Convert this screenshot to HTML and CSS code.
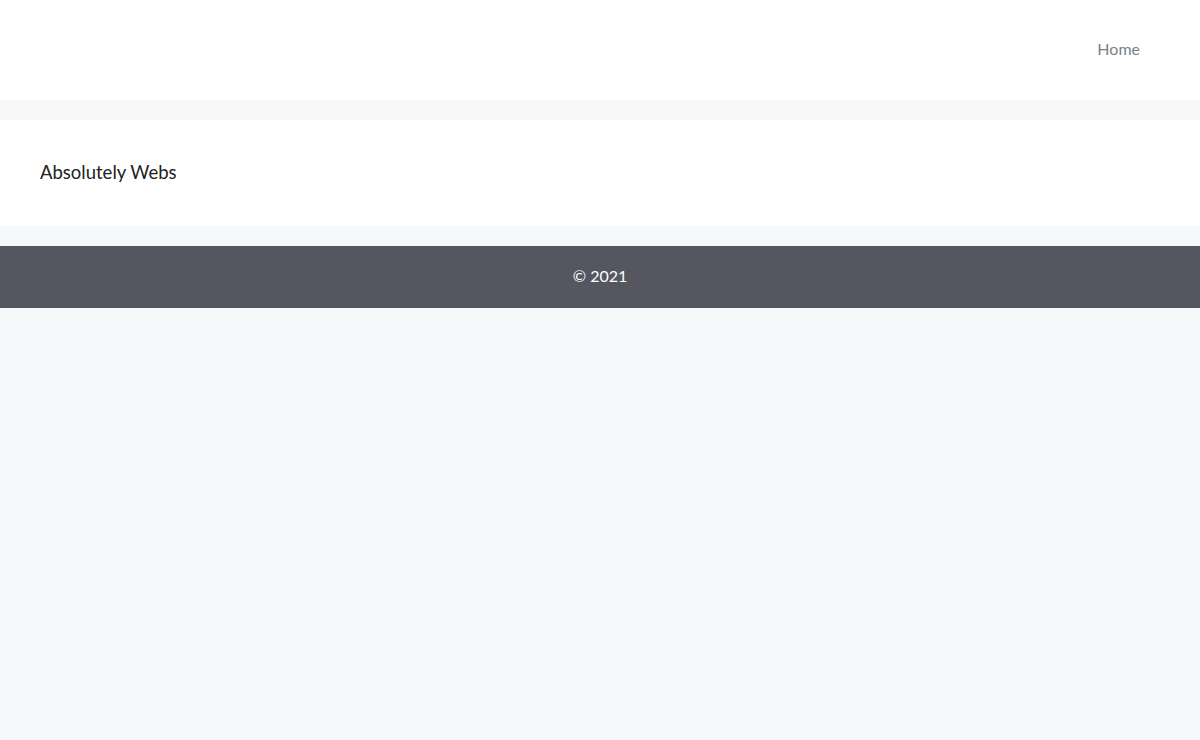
FILE: index.html
```html
<!DOCTYPE html>
<html>
<head>
<meta charset="utf-8">
<link rel="stylesheet" href="styles.css">
</head>
<body>
<header class="site-header">
  <nav class="nav"><a class="nav-link" href="#">Home</a></nav>
</header>
<main class="content">
  <p class="title">Absolutely Webs</p>
</main>
<footer class="site-footer">© 2021</footer>
</body>
</html>
```
FILE: styles.css
```css
html, body {
  margin: 0;
  padding: 0;
  background: #f7f8fa;
  font-family: Lato, "Open Sans", sans-serif;
}
.site-header {
  height: 100px;
  background: #ffffff;
  display: flex;
  align-items: center;
  justify-content: flex-end;
  padding: 0 60px 4px;
  box-sizing: border-box;
}
.nav-link {
  color: #7b818c;
  font-size: 16px;
  text-decoration: none;
}
.content {
  margin-top: 20px;
  height: 106px;
  background: #ffffff;
  display: flex;
  align-items: center;
  padding: 0 40px 2px;
  box-sizing: border-box;
}
.title {
  margin: 0;
  font-size: 18.5px;
  color: #222222;
}
.site-footer {
  margin-top: 20px;
  height: 62px;
  background: #55565f;
  color: #ffffff;
  font-size: 16px;
  display: flex;
  align-items: center;
  justify-content: center;
  padding-bottom: 4px;
  box-sizing: border-box;
}
```
